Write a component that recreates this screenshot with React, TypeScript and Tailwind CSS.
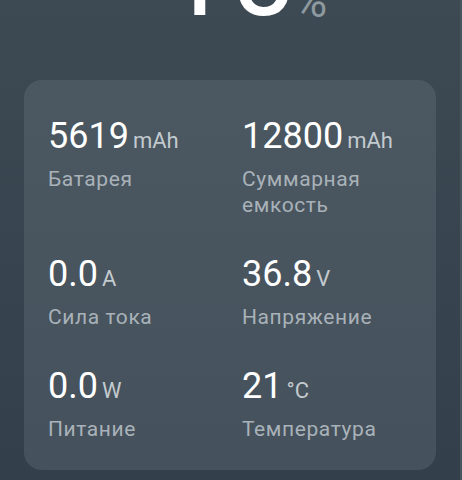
import React from "react";

type Item = { value: string; unit: string; label: string };

const items: Item[] = [
  { value: "5619", unit: "mAh", label: "Батарея" },
  { value: "12800", unit: "mAh", label: "Суммарная емкость" },
  { value: "0.0", unit: "A", label: "Сила тока" },
  { value: "36.8", unit: "V", label: "Напряжение" },
  { value: "0.0", unit: "W", label: "Питание" },
  { value: "21", unit: "°C", label: "Температура" },
];

export default function App() {
  return (
    <div className="flex h-[480px] w-full overflow-hidden bg-gradient-to-b from-[#3d4a53] to-[#33404c] font-['Roboto','Noto_Sans',sans-serif]">
      <div className="flex flex-1 flex-col">
        <div className="flex h-[80px] justify-center">
          <div className="relative -mt-[86px] h-[120px]">
            <span className="block text-[120px] leading-none font-normal text-white">10</span>
            <span className="absolute left-full bottom-[10px] -ml-1 text-[46px] leading-none text-[#8d989f]">%</span>
          </div>
        </div>
        <div className="mx-6 grid grid-cols-2 gap-x-6 gap-y-9 rounded-[18px] bg-gradient-to-b from-[#4b5861] to-[#45515c] px-6 pt-9 pb-7">
          {items.map((it, i) => (
            <div key={i} className="flex flex-col">
              <div className="flex items-baseline h-[40px] leading-[40px]">
                <span className="text-[36px] text-white">{it.value}</span>
                <span className="ml-1 text-[22px] text-[#c3cacf]">{it.unit}</span>
              </div>
              <div className="mt-[10px] text-[21px] leading-[26px] tracking-[0.6px] text-[#a9b2b9]">{it.label}</div>
            </div>
          ))}
        </div>
      </div>
      <div className="w-[2px] bg-[#48545e]" />
    </div>
  );
}
